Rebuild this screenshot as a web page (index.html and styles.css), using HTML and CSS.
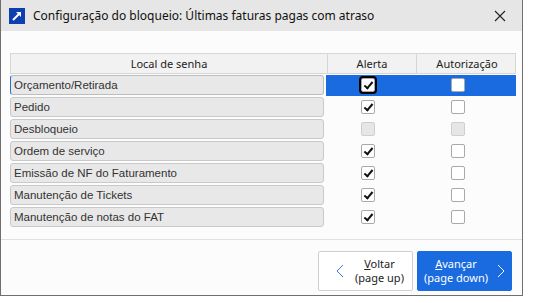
FILE: index.html
```html
<!DOCTYPE html>
<html lang="pt-BR">
<head>
  <meta charset="UTF-8">
  <title>Configuração do bloqueio</title>
  <link rel="stylesheet" href="styles.css">
</head>
<body>
  <div class="window">
    <div class="titlebar">
      <svg class="app-icon" width="16" height="16" viewBox="0 0 16 16">
        <rect width="16" height="16" fill="#0d3fae"/>
        <path d="M4 12 L11 5" stroke="#fff" stroke-width="2" fill="none"/>
        <path d="M7 4 L12 4 L12 9 Z" fill="#fff"/>
      </svg>
      <span class="title">Configuração do bloqueio: Últimas faturas pagas com atraso</span>
      <svg class="close" width="12" height="12" viewBox="0 0 12 12">
        <path d="M1 1 L11 11 M11 1 L1 11" stroke="#222" stroke-width="1.1" fill="none"/>
      </svg>
    </div>

    <div class="content">
      <div class="grid">
        <div class="head">
          <div class="hcell">Local de senha</div>
          <div class="hcell">Alerta</div>
          <div class="hcell">Autorização</div>
        </div>

        <div class="row selected">
          <div class="label focus">Orçamento/Retirada</div>
          <div class="check"><span class="box on focused"></span></div>
          <div class="check"><span class="box"></span></div>
        </div>
        <div class="row">
          <div class="label">Pedido</div>
          <div class="check"><span class="box on"></span></div>
          <div class="check"><span class="box"></span></div>
        </div>
        <div class="row">
          <div class="label">Desbloqueio</div>
          <div class="check"><span class="box off"></span></div>
          <div class="check"><span class="box off"></span></div>
        </div>
        <div class="row">
          <div class="label">Ordem de serviço</div>
          <div class="check"><span class="box on"></span></div>
          <div class="check"><span class="box"></span></div>
        </div>
        <div class="row">
          <div class="label">Emissão de NF do Faturamento</div>
          <div class="check"><span class="box on"></span></div>
          <div class="check"><span class="box"></span></div>
        </div>
        <div class="row">
          <div class="label">Manutenção de Tickets</div>
          <div class="check"><span class="box on"></span></div>
          <div class="check"><span class="box"></span></div>
        </div>
        <div class="row">
          <div class="label">Manutenção de notas do FAT</div>
          <div class="check"><span class="box on"></span></div>
          <div class="check"><span class="box"></span></div>
        </div>
      </div>
    </div>

    <div class="footer">
      <button class="btn back">
        <svg width="8" height="14" viewBox="0 0 8 14"><path d="M7 1 L1 7 L7 13" stroke="#3b78d8" stroke-width="1" fill="none"/></svg>
        <span class="btn-text"><u>V</u>oltar<br>(page up)</span>
      </button>
      <button class="btn next">
        <span class="btn-text"><u>A</u>vançar<br>(page down)</span>
        <svg width="8" height="14" viewBox="0 0 8 14"><path d="M1 1 L7 7 L1 13" stroke="#fff" stroke-width="1" fill="none"/></svg>
      </button>
    </div>
  </div>
</body>
</html>
```

FILE: styles.css
```css
body {
  margin: 0;
  background-color: #fff;
  font-family: "Noto Sans", "Open Sans", sans-serif;
  color: #222;
}

.window {
  box-sizing: border-box;
  width: 523px;
  height: 296px;
  border-left: 1px solid #6f6f6f;
  border-right: 1px solid #6f6f6f;
  border-bottom: 1px solid #6f6f6f;
  background-color: #fcfcfc;
  display: flex;
  flex-direction: column;
}

.titlebar {
  height: 31px;
  flex: none;
  background-color: #e6e6e6;
  display: flex;
  align-items: center;
  padding-left: 8px;
}

.app-icon {
  flex: none;
}

.title {
  margin-left: 8px;
  font-size: 12px;
  color: #111;
  flex: 1;
}

.close {
  margin-right: 16px;
}

.content {
  flex: 1;
  padding: 22px 0 0 9px;
}

.grid {
  width: 506px;
}

.head {
  display: grid;
  grid-template-columns: 316px 89px 101px;
  height: 21px;
  box-sizing: border-box;
  border: 1px solid #d6d6d6;
  background-color: #f2f2f2;
}

.hcell {
  font-size: 11px;
  color: #222;
  text-align: center;
  line-height: 19px;
  border-left: 1px solid #d6d6d6;
}

.hcell:first-child {
  border-left: none;
}

.row {
  display: grid;
  grid-template-columns: 316px 89px 101px;
  height: 22px;
  align-items: center;
}

.row.selected .check {
  background-color: #1a6be0;
  height: 21px;
}

.label {
  box-sizing: border-box;
  height: 20px;
  margin-right: 2px;
  border: 1px solid #c9c9c9;
  border-radius: 3px;
  background-color: #e8e8e8;
  font-family: "Liberation Sans", Arial, sans-serif;
  font-size: 11.5px;
  line-height: 18px;
  padding-left: 3px;
  color: #333;
}

.label.focus {
  border-color: #bdbdbd;
  border-left: 1px solid #2a6fd6;
}

.check {
  display: flex;
  align-items: center;
  height: 22px;
}

.check:nth-child(2) {
  padding-left: 35px;
}

.check:nth-child(3) {
  padding-left: 36px;
}

.box {
  box-sizing: border-box;
  width: 14px;
  height: 14px;
  border: 1px solid #a9a9a9;
  border-radius: 2px;
  background-color: #fff;
  position: relative;
}

.box.off {
  background-color: #e6e6e6;
  border-color: #cfcfcf;
}

.box.on::after {
  content: "";
  position: absolute;
  left: 4px;
  top: 1px;
  width: 3px;
  height: 7px;
  border: solid #111;
  border-width: 0 2px 2px 0;
  transform: rotate(40deg);
}

.box.focused {
  outline: 2px solid #000;
  outline-offset: 0;
}

.footer {
  box-sizing: border-box;
  height: 56px;
  flex: none;
  border-top: 1px solid #e0e0e0;
  display: flex;
  justify-content: flex-end;
  align-items: flex-start;
  padding: 11px 10px 0 0;
  gap: 4px;
}

.btn {
  box-sizing: border-box;
  width: 95px;
  height: 40px;
  border-radius: 2px;
  font-family: "Noto Sans", "Open Sans", sans-serif;
  font-size: 11px;
  line-height: 14px;
  display: flex;
  align-items: center;
  padding: 0;
}

.btn.back {
  background-color: #fff;
  border: 1px solid #cfcfcf;
  color: #222;
  padding-left: 17px;
  gap: 11px;
}

.btn.next {
  background-color: #1a6be0;
  border: 1px solid #1a6be0;
  color: #fff;
  padding-left: 6px;
  gap: 9px;
}

.btn-text {
  text-align: center;
}
```
